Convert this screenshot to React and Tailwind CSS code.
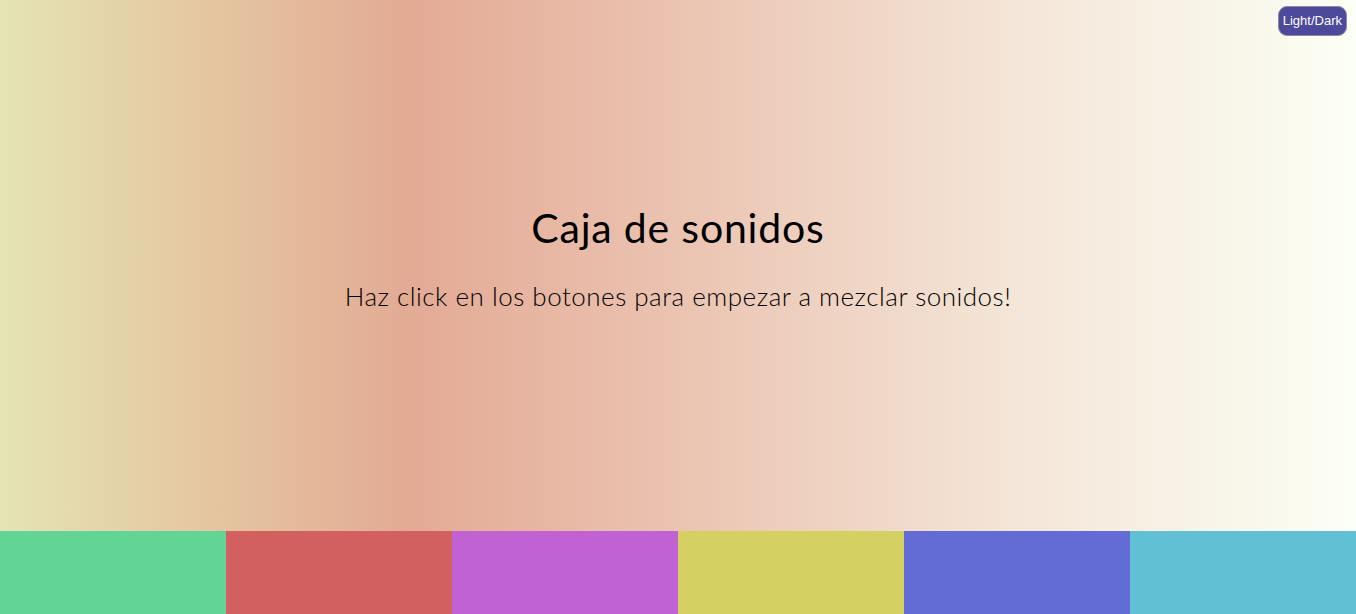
export default function App() {
  const pads = ['bg-[#62d495]', 'bg-[#d26060]', 'bg-[#c062d4]', 'bg-[#d4d162]', 'bg-[#636cd4]', 'bg-[#62c0d4]'];

  return (
    <div className="relative h-screen flex flex-col bg-[linear-gradient(to_right,#e4e4b4_0%,#e4c9a2_14%,#e3aa94_30%,#ebc3b1_50%,#f4e6d8_75%,#fcfff5_100%)] font-['Lato','Open_Sans',sans-serif]">
      <button className="absolute top-[6px] right-[9px] h-[30px] px-[4px] rounded-[9px] bg-[#4d4a9b] border border-[#8a8aa8] text-white text-[13px] font-['Liberation_Sans',Arial,sans-serif]">
        Light/Dark
      </button>
      <div className="flex-1 flex flex-col items-center justify-center pb-[16px]">
        <h1 className="text-[41px] text-black tracking-[0.8px] leading-none">Caja de sonidos</h1>
        <p className="mt-[35px] text-[26px] font-light text-black leading-none tracking-[0.5px]">
          Haz click en los botones para empezar a mezclar sonidos!
        </p>
      </div>
      <div className="flex h-[83px]">
        {pads.map((c, i) => (
          <div key={i} className={`flex-1 ${c}`} />
        ))}
      </div>
    </div>
  );
}
